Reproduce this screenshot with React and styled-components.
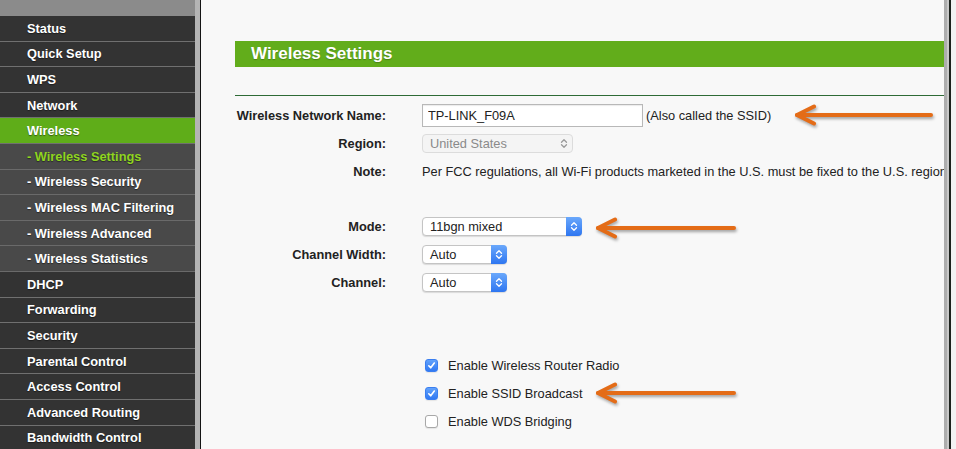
import React from "react";
import styled, { createGlobalStyle } from "styled-components";

const Global = createGlobalStyle`
  html, body { margin: 0; padding: 0; background: #f8f8f8; }
  body { font-family: "Liberation Sans", Arial, Helvetica, sans-serif; }
  #root { width: 956px; height: 449px; overflow: hidden; }
`;

const Page = styled.div`
  display: flex;
  width: 956px;
  height: 449px;
  overflow: hidden;
`;

const Sidebar = styled.nav`
  width: 195px;
  flex: none;
  box-sizing: border-box;
  background: #8b8b8b;
  padding-top: 16px;
  display: flex;
  flex-direction: column;
`;

const NavItem = styled.div`
  flex: none;
  height: 25.6px;
  box-sizing: border-box;
  border-bottom: 1.8px solid ${(p) => (p.$sub ? "#6a6a6a" : "#707070")};
  background: ${(p) => (p.$active ? "#5fad19" : p.$sub ? "#494949" : "#333333")};
  color: ${(p) => (p.$current ? "#8fd41f" : "#ffffff")};
  font-size: 12.8px;
  font-weight: bold;
  padding-left: 27px;
  display: flex;
  align-items: center;
  white-space: nowrap;
  text-shadow: 0 1px 1px rgba(0, 0, 0, 0.45);
`;

const Gutter = styled.div`
  width: 6px;
  flex: none;
  background: linear-gradient(to right, #b4b4b4 0 5px, #141414 5px 6px);
`;

const Main = styled.main`
  position: relative;
  flex: 1;
  min-width: 0;
  box-sizing: border-box;
  background: #f8f8f8;
  overflow: hidden;
  padding: 41px 0 0 34px;
`;

const RightFrame = styled.div`
  width: 12px;
  flex: none;
  background: linear-gradient(
    to right,
    #adadad 0 3px,
    #c9c9c9 3px 5.5px,
    #1c211c 5.5px 7px,
    #f2f2f2 7px
  );
`;

const TitleBar = styled.h1`
  margin: 0;
  height: 26px;
  background: #62ad1b;
  color: #ffffff;
  font-size: 17px;
  font-weight: bold;
  padding-left: 16px;
  display: flex;
  align-items: center;
  text-shadow: 0 1px 1px rgba(0, 0, 0, 0.25);
`;

const Rule = styled.div`
  margin-top: 28px;
  border-top: 1px solid #2e6b36;
`;

const Form = styled.div`
  padding-top: 6.2px;
  display: flex;
  flex-direction: column;
`;

const Row = styled.div`
  display: grid;
  grid-template-columns: 151px auto;
  column-gap: 36px;
  align-items: center;
  height: 27.6px;
  white-space: nowrap;
`;

const Spacer = styled.div`
  height: ${(p) => p.$h}px;
  flex: none;
`;

const Label = styled.div`
  text-align: right;
  font-size: 12.8px;
  font-weight: bold;
  color: #222222;
`;

const Control = styled.div`
  display: flex;
  align-items: center;
  gap: ${(p) => p.$gap || 3}px;
  font-size: 12.8px;
  color: #222222;
  padding-left: ${(p) => p.$indent || 0}px;
`;

const TextInput = styled.input`
  width: 221px;
  height: 23px;
  box-sizing: border-box;
  border: 1px solid #b8b8b8;
  box-shadow: inset 0 1px 1px rgba(0, 0, 0, 0.08);
  background: #ffffff;
  padding: 0 5px;
  font-family: "Liberation Sans", Arial, sans-serif;
  font-size: 12.8px;
  color: #222222;
  outline: none;
`;

const SelectBox = styled.div`
  width: ${(p) => p.$w}px;
  height: 19px;
  box-sizing: border-box;
  display: flex;
  align-items: stretch;
  border: 1px solid ${(p) => (p.$disabled ? "#dcdcdc" : "#c4c4c4")};
  border-radius: 4px;
  background: ${(p) => (p.$disabled ? "#f4f4f4" : "#ffffff")};
  box-shadow: ${(p) => (p.$disabled ? "none" : "0 1px 1px rgba(0,0,0,0.12)")};
`;

const SelectText = styled.span`
  flex: 1;
  padding-left: 7px;
  display: flex;
  align-items: center;
  font-size: 12.8px;
  color: ${(p) => (p.$disabled ? "#8a8a8a" : "#222222")};
`;

const Stepper = styled.span`
  width: ${(p) => (p.$disabled ? 18 : 16)}px;
  margin: -1px -1px -1px 0;
  display: flex;
  align-items: center;
  justify-content: center;
  border-radius: 0 4px 4px 0;
  background: ${(p) =>
    p.$disabled ? "transparent" : "linear-gradient(#6aa8fb, #2e76f1)"};
  color: ${(p) => (p.$disabled ? "#9a9a9a" : "#ffffff")};
`;

const Check = styled.span`
  width: 13px;
  height: 13px;
  margin-left: 3px;
  box-sizing: border-box;
  border-radius: 3px;
  display: flex;
  align-items: center;
  justify-content: center;
  border: 1px solid ${(p) => (p.$checked ? "#3a7ef0" : "#a8a8a8")};
  background: ${(p) => (p.$checked ? "linear-gradient(#62a2fb, #3079f3)" : "#ffffff")};
  box-shadow: 0 1px 1px rgba(0, 0, 0, 0.08);
`;

const ArrowWrap = styled.svg`
  position: absolute;
  left: ${(p) => p.$left}px;
  top: ${(p) => p.$top}px;
  overflow: visible;
  filter: drop-shadow(1px 2px 1.5px rgba(0, 0, 0, 0.35));
`;

const Chevrons = () => (
  <svg width="8" height="11" viewBox="0 0 8 11" fill="none">
    <path
      d="M1.5 4.2 L4 1.7 L6.5 4.2 M1.5 6.8 L4 9.3 L6.5 6.8"
      stroke="currentColor"
      strokeWidth="1.3"
      strokeLinecap="round"
      strokeLinejoin="round"
    />
  </svg>
);

const Select = ({ w, value, disabled }) => (
  <SelectBox $w={w} $disabled={disabled}>
    <SelectText $disabled={disabled}>{value}</SelectText>
    <Stepper $disabled={disabled}>
      <Chevrons />
    </Stepper>
  </SelectBox>
);

const CheckRow = ({ checked, children }) => (
  <Row>
    <span />
    <Control $gap={10}>
      <Check $checked={checked}>
        {checked && (
          <svg width="9" height="9" viewBox="0 0 9 9" fill="none">
            <path
              d="M1.8 4.8 L3.7 6.8 L7.3 2"
              stroke="#ffffff"
              strokeWidth="1.6"
              strokeLinecap="round"
              strokeLinejoin="round"
            />
          </svg>
        )}
      </Check>
      <span>{children}</span>
    </Control>
  </Row>
);

const Arrow = ({ left, top, length }) => (
  <ArrowWrap $left={left} $top={top} width={length + 6} height="28" viewBox={`0 0 ${length + 6} 28`}>
    <path
      d={`M4 14 L${length + 2} 14`}
      stroke="#e46c17"
      strokeWidth="4"
      strokeLinecap="round"
    />
    <path
      d="M21 5.5 L4 14 L21 22.5"
      stroke="#e46c17"
      strokeWidth="4"
      strokeLinecap="round"
      strokeLinejoin="round"
      fill="none"
    />
  </ArrowWrap>
);

const nav = [
  { label: "Status" },
  { label: "Quick Setup" },
  { label: "WPS" },
  { label: "Network" },
  { label: "Wireless", active: true },
  { label: "- Wireless Settings", sub: true, current: true },
  { label: "- Wireless Security", sub: true },
  { label: "- Wireless MAC Filtering", sub: true },
  { label: "- Wireless Advanced", sub: true },
  { label: "- Wireless Statistics", sub: true },
  { label: "DHCP" },
  { label: "Forwarding" },
  { label: "Security" },
  { label: "Parental Control" },
  { label: "Access Control" },
  { label: "Advanced Routing" },
  { label: "Bandwidth Control" },
];

export default function App() {
  return (
    <>
      <Global />
      <Page>
        <Sidebar>
          {nav.map((n) => (
            <NavItem key={n.label} $active={n.active} $sub={n.sub} $current={n.current}>
              {n.label}
            </NavItem>
          ))}
        </Sidebar>
        <Gutter />
        <Main>
          <TitleBar>Wireless Settings</TitleBar>
          <Rule />
          <Form>
            <Row>
              <Label>Wireless Network Name:</Label>
              <Control>
                <TextInput readOnly defaultValue="TP-LINK_F09A" />
                <span>(Also called the SSID)</span>
              </Control>
            </Row>
            <Row>
              <Label>Region:</Label>
              <Control>
                <Select w={151} value="United States" disabled />
              </Control>
            </Row>
            <Row>
              <Label>Note:</Label>
              <Control>
                Per FCC regulations, all Wi-Fi products marketed in the U.S. must be fixed to the U.S. region
              </Control>
            </Row>
            <Spacer $h={28.2} />
            <Row>
              <Label>Mode:</Label>
              <Control>
                <Select w={160} value="11bgn mixed" />
              </Control>
            </Row>
            <Row>
              <Label>Channel Width:</Label>
              <Control>
                <Select w={85} value="Auto" />
              </Control>
            </Row>
            <Row>
              <Label>Channel:</Label>
              <Control>
                <Select w={85} value="Auto" />
              </Control>
            </Row>
            <Spacer $h={56.2} />
            <CheckRow checked>Enable Wireless Router Radio</CheckRow>
            <CheckRow checked>Enable SSID Broadcast</CheckRow>
            <CheckRow>Enable WDS Bridging</CheckRow>
          </Form>
          <Arrow left={592} top={101} length={136} />
          <Arrow left={393} top={214} length={138} />
          <Arrow left={393} top={379} length={138} />
        </Main>
        <RightFrame />
      </Page>
    </>
  );
}
